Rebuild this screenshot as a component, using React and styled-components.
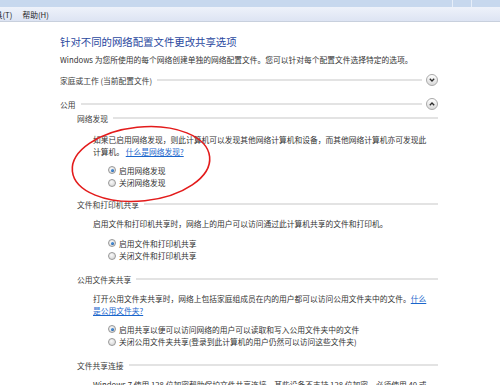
import styled, { createGlobalStyle } from 'styled-components';

const GlobalStyle = createGlobalStyle`
  body {
    margin: 0;
    background: #ffffff;
    font-family: "Noto Sans CJK SC", "Liberation Sans", sans-serif;
  }
`;

const Page = styled.div`
  position: relative;
  width: 500px;
  height: 385px;
  overflow: hidden;
  background: #ffffff;
`;

const TopStrip = styled.div`
  display: flex;
  justify-content: flex-end;
  gap: 18px;
  height: 7px;
  padding-right: 28px;
  background: #c7d8ee;
`;

const StripDivider = styled.div`
  width: 1px;
  background: #e6eef9;
`;

const MenuBar = styled.div`
  display: flex;
  align-items: center;
  gap: 10px;
  height: 14px;
  overflow: hidden;
  background: linear-gradient(#eef2fa, #dde4f3);
  border-bottom: 1px solid #c8d0dd;
`;

const MenuItem = styled.span`
  font-size: 7.75px;
  color: #1e1e1e;
  white-space: nowrap;
  margin-left: ${(p) => (p.$first ? '-13px' : '0')};
`;

const Content = styled.div`
  padding: 0 62px 0 60px;
`;

const Title = styled.div`
  margin-top: 13px;
  font-size: 10.4px;
  line-height: 14px;
  color: #2a48a0;
  white-space: nowrap;
`;

const Intro = styled.div`
  margin-top: 5px;
  font-size: 7.75px;
  line-height: 12px;
  color: #333333;
  white-space: nowrap;
`;

const HeaderRow = styled.div`
  display: flex;
  align-items: center;
  gap: 5px;
  height: ${(p) => (p.$sub ? 12 : 14)}px;
  margin-top: ${(p) => p.$mt}px;
  padding-left: ${(p) => (p.$sub ? 17 : 0)}px;
`;

const HeaderLabel = styled.span`
  font-size: 7.75px;
  color: #3c3c3c;
  white-space: nowrap;
`;

const Rule = styled.div`
  flex: 1;
  height: 2px;
  background: #e3e3e3;
`;

const Toggle = styled.div`
  display: flex;
  align-items: center;
  justify-content: center;
  width: 12px;
  height: 12px;
  margin-left: -1px;
  border: 1px solid #a9a9a9;
  border-radius: 50%;
  background: linear-gradient(#ffffff, #d9d9d9);
  box-sizing: border-box;
`;

const Para = styled.div`
  margin-top: ${(p) => p.$mt}px;
  padding: 0 7px 0 33px;
  font-size: 7.75px;
  line-height: 12px;
  color: #333333;
`;

const Link = styled.a`
  color: #1a66cc;
  text-decoration: underline;
`;

const RadioGroup = styled.div`
  display: flex;
  flex-direction: column;
  margin-top: ${(p) => p.$mt}px;
  padding-left: 48px;
`;

const RadioRow = styled.label`
  display: flex;
  align-items: center;
  gap: 3px;
  height: 12.5px;
  font-size: 7.75px;
  color: #333333;
  white-space: nowrap;
`;

const RadioDot = styled.span`
  position: relative;
  width: 8px;
  height: 8px;
  border: 1px solid #989898;
  border-radius: 50%;
  background: radial-gradient(circle at 40% 35%, #fafafa, #cfcfcf);
  box-sizing: border-box;

  &::after {
    content: '';
    display: ${(p) => (p.$checked ? 'block' : 'none')};
    position: absolute;
    left: 1.5px;
    top: 1.5px;
    width: 3px;
    height: 3px;
    border-radius: 50%;
    background: radial-gradient(circle at 40% 35%, #4f9be8, #0b4a94);
  }
`;

const Annotation = styled.svg`
  position: absolute;
  left: 0;
  top: 0;
  pointer-events: none;
`;

function Chevron({ up }) {
  return (
    <svg width="6" height="4" viewBox="0 0 6 4">
      <path
        d={up ? 'M0.8 3.3 L3 1 L5.2 3.3' : 'M0.8 0.8 L3 3 L5.2 0.8'}
        fill="none"
        stroke="#2b2b2b"
        strokeWidth="1.3"
      />
    </svg>
  );
}

function Radio({ checked, children }) {
  return (
    <RadioRow>
      <RadioDot $checked={checked} />
      {children}
    </RadioRow>
  );
}

function App() {
  return (
    <Page>
      <GlobalStyle />
      <TopStrip>
        <StripDivider />
        <StripDivider />
      </TopStrip>
      <MenuBar>
        <MenuItem $first>工具(T)</MenuItem>
        <MenuItem>帮助(H)</MenuItem>
      </MenuBar>

      <Content>
        <Title>针对不同的网络配置文件更改共享选项</Title>
        <Intro>Windows 为您所使用的每个网络创建单独的网络配置文件。您可以针对每个配置文件选择特定的选项。</Intro>

        <HeaderRow $mt={7}>
          <HeaderLabel>家庭或工作 (当前配置文件)</HeaderLabel>
          <Rule />
          <Toggle>
            <Chevron />
          </Toggle>
        </HeaderRow>

        <HeaderRow $mt={10}>
          <HeaderLabel>公用</HeaderLabel>
          <Rule />
          <Toggle>
            <Chevron up />
          </Toggle>
        </HeaderRow>

        <HeaderRow $sub $mt={1}>
          <HeaderLabel>网络发现</HeaderLabel>
          <Rule />
        </HeaderRow>
        <Para $mt={10}>
          如果已启用网络发现，则此计算机可以发现其他网络计算机和设备，而其他网络计算机亦可发现此计算机。 <Link>什么是网络发现?</Link>
        </Para>
        <RadioGroup $mt={6}>
          <Radio checked>启用网络发现</Radio>
          <Radio>关闭网络发现</Radio>
        </RadioGroup>

        <HeaderRow $sub $mt={9}>
          <HeaderLabel>文件和打印机共享</HeaderLabel>
          <Rule />
        </HeaderRow>
        <Para $mt={8}>启用文件和打印机共享时，网络上的用户可以访问通过此计算机共享的文件和打印机。</Para>
        <RadioGroup $mt={7}>
          <Radio checked>启用文件和打印机共享</Radio>
          <Radio>关闭文件和打印机共享</Radio>
        </RadioGroup>

        <HeaderRow $sub $mt={11}>
          <HeaderLabel>公用文件夹共享</HeaderLabel>
          <Rule />
        </HeaderRow>
        <Para $mt={8}>
          打开公用文件夹共享时，网络上包括家庭组成员在内的用户都可以访问公用文件夹中的文件。<Link>什么是公用文件夹?</Link>
        </Para>
        <RadioGroup $mt={6}>
          <Radio checked>启用共享以便可以访问网络的用户可以读取和写入公用文件夹中的文件</Radio>
          <Radio>关闭公用文件夹共享(登录到此计算机的用户仍然可以访问这些文件夹)</Radio>
        </RadioGroup>

        <HeaderRow $sub $mt={11}>
          <HeaderLabel>文件共享连接</HeaderLabel>
          <Rule />
        </HeaderRow>
        <Para $mt={8}>
          Windows 7 使用 128 位加密帮助保护文件共享连接。某些设备不支持 128 位加密，必须使用 40 或 56 位加密。
        </Para>
      </Content>

      <Annotation width="500" height="385" viewBox="0 0 500 385">
        <ellipse
          cx="141"
          cy="164"
          rx="69"
          ry="37"
          transform="rotate(-6 141 164)"
          fill="none"
          stroke="#e31b1b"
          strokeWidth="1.6"
        />
      </Annotation>
    </Page>
  );
}

export default App;
